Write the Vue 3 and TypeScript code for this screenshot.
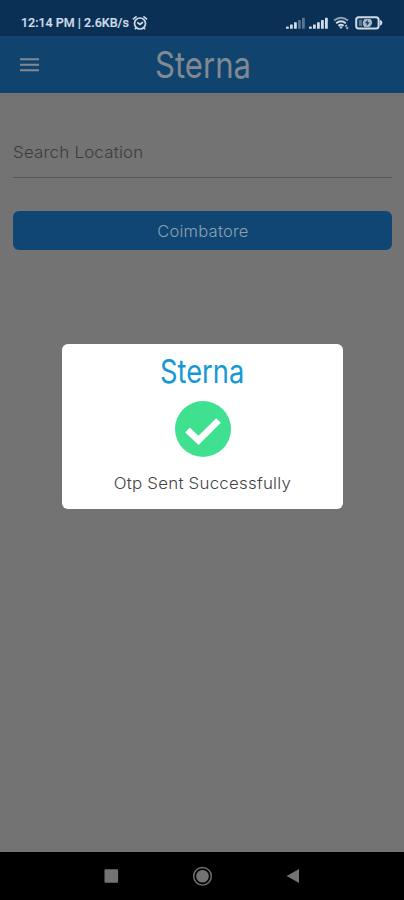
<script setup lang="ts">
const time = '12:14 PM'
const speed = '2.6KB/s'
const city = 'Coimbatore'
const bars = [2, 4, 6, 8, 10]
const signals = [3, 5]
</script>

<template>
  <div class="screen">
    <div class="status">
      <span class="clock">{{ time }} | {{ speed }}</span>
      <svg class="alarm" viewBox="0 0 16 16" width="16" height="16">
        <g fill="none" stroke="currentColor" stroke-width="1.7" stroke-linecap="round">
          <circle cx="8" cy="8.5" r="5.5" />
          <path d="M1.5 3.9 4 1.9M14.5 3.9 12 1.9M5.8 7.8l2.2 1.6 2.4-1.9M4.3 12.8l-.9.9M11.7 12.8l.9.9" />
        </g>
      </svg>
      <span class="grow"></span>
      <svg v-for="(level, s) in signals" :key="s" class="signal" viewBox="0 0 19 12" width="19" height="12">
        <rect
          v-for="(h, i) in bars"
          :key="i"
          :x="i * 4"
          :y="11.8 - h * 1.1"
          width="2.8"
          :height="h * 1.1"
          rx="0.6"
          fill="currentColor"
          :opacity="i < level ? 1 : 0.4"
        />
      </svg>
      <svg class="wifi" viewBox="0 0 17 14" width="17" height="14">
        <g fill="none" stroke="currentColor" stroke-width="1.9">
          <path d="M1 4.6Q8 -1.2 15 4.6" opacity="0.65" />
          <path d="M3.2 7.2Q8 3.2 12.8 7.2" />
          <path d="M5.4 9.7Q8 7.6 10.6 9.7" />
        </g>
        <path d="M6 10.4h4L8 13zM11.6 10.6l1.6-2 1.4 2zM12.6 11.4h3.2l-1.6 2.2z" fill="currentColor" />
      </svg>
      <svg class="battery" viewBox="0 0 28 14" width="28" height="14">
        <rect x="1.2" y="1.2" width="22.4" height="11.4" rx="2.6" fill="none" stroke="currentColor" stroke-width="2" />
        <rect x="3.8" y="3.6" width="3.4" height="6.6" fill="currentColor" opacity="0.4" />
        <path d="M9.5 3h6q2 2 1.6 4.2T14.5 11h-5Q7.4 9 7.8 6.8T9.5 3z" fill="currentColor" opacity="0.8" />
        <path d="M13 3.4 9.8 7.2h2.2l-.6 3 3.3-4h-2.2z" fill="#17395a" />
        <path d="M24.8 3.6q2.6 1.2 2.6 3.2t-2.6 3.2z" fill="currentColor" />
      </svg>
    </div>

    <header class="bar">
      <svg class="menu" viewBox="0 0 20 14" width="20" height="14">
        <path d="M0 1.2h19M0 6.7h19M0 12.2h19" stroke="currentColor" stroke-width="2.1" />
      </svg>
      <span class="brand">Sterna</span>
    </header>

    <main class="content">
      <div class="search"><span class="wide from-left">Search Location</span></div>
      <button class="city" type="button"><span class="wide">{{ city }}</span></button>
    </main>

    <nav class="nav">
      <svg viewBox="0 0 20 20" width="20" height="20"><rect x="3.5" y="3.2" width="13.6" height="13.6" rx="1.2" fill="currentColor" /></svg>
      <svg viewBox="0 0 20 20" width="20" height="20">
        <circle cx="10.5" cy="10.3" r="8.8" fill="none" stroke="currentColor" stroke-width="1.4" />
        <circle cx="10.5" cy="10.3" r="6.3" fill="currentColor" />
      </svg>
      <svg viewBox="0 0 20 20" width="20" height="20"><path d="M3.6 10 16 3v14z" fill="currentColor" /></svg>
    </nav>

    <div class="dialog" role="dialog">
      <span class="logo">Sterna</span>
      <svg class="check" viewBox="0 0 56 56" width="56" height="56">
        <circle cx="28" cy="28" r="28" fill="#3fe08f" />
        <path d="M12.5 29 23.5 39.3 43.5 19.5" fill="none" stroke="#fff" stroke-width="6.6" stroke-linejoin="miter" />
      </svg>
      <p class="message"><span class="wide">Otp Sent Successfully</span></p>
    </div>
  </div>
</template>

<style>
body {
  margin: 0;
}
</style>

<style scoped>
.screen {
  position: relative;
  display: flex;
  flex-direction: column;
  width: 404px;
  height: 900px;
  overflow: hidden;
  background: #737373;
  font-family: Inter, "Open Sans", sans-serif;
}
.status {
  display: flex;
  align-items: center;
  height: 36px;
  padding: 10px 21px 0 21px;
  box-sizing: border-box;
  background: #0a3055;
  color: #cfdbe6;
}
.clock {
  font: 500 12.5px/16px Roboto, sans-serif;
  -webkit-text-stroke: 0.2px currentColor;
  white-space: pre;
}
.alarm {
  margin-left: 3px;
}
.grow {
  flex: 1;
}
.signal {
  margin-right: 4px;
}
.wifi {
  margin: 0 5px 0 1px;
}
.bar {
  display: flex;
  align-items: center;
  height: 57px;
  padding: 0 38px 0 20px;
  background: #10436e;
  color: #818a92;
}
.brand,
.logo {
  font-weight: 400;
  white-space: nowrap;
  transform: scaleX(0.84);
}
.brand {
  flex: 1;
  font-size: 37px;
  line-height: 56px;
  text-align: center;
}
.content {
  flex: 1;
  display: flex;
  flex-direction: column;
  padding: 34px 12px 0 13px;
}
.wide {
  display: inline-block;
  font-weight: 300;
  letter-spacing: 0.2px;
  transform: scaleX(1.09);
  white-space: nowrap;
}
.from-left {
  transform-origin: left;
}
.search {
  height: 51px;
  box-sizing: border-box;
  border-bottom: 1px solid #575757;
  color: #3c3c3c;
  font-size: 15.5px;
  line-height: 52px;
}
.city {
  height: 39px;
  margin-top: 33px;
  padding: 2px 0 0;
  border: 0;
  border-radius: 6px;
  background: #104673;
  color: #8fa0af;
  font: 300 15.2px Inter, sans-serif;
}
.nav {
  display: flex;
  justify-content: center;
  align-items: center;
  gap: 71px;
  height: 48px;
  background: #000;
  color: #737373;
}
.dialog {
  position: absolute;
  left: 62px;
  top: 344px;
  display: flex;
  flex-direction: column;
  align-items: center;
  width: 281px;
  height: 165px;
  padding-top: 4px;
  box-sizing: border-box;
  border-radius: 6px;
  background: #fff;
}
.logo {
  color: #1599d6;
  font-size: 32.5px;
  line-height: 48px;
}
.check {
  margin-top: 5px;
}
.message {
  margin: 16px 0 0;
  color: #444;
  font-size: 15.5px;
  line-height: 22px;
}
</style>
